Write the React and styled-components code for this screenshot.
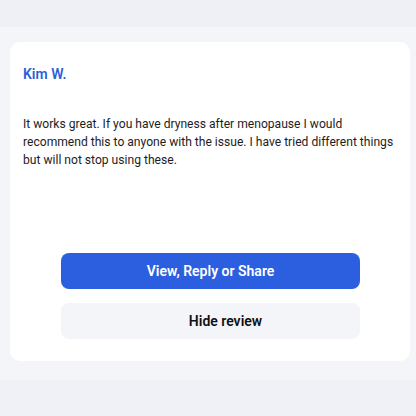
import styled, { createGlobalStyle } from "styled-components";

const GlobalStyle = createGlobalStyle`
  html, body {
    margin: 0;
    padding: 0;
    background: #f4f5f9;
    font-family: Roboto, "Noto Sans", sans-serif;
  }
`;

const Page = styled.div`
  display: flex;
  flex-direction: column;
  width: 416px;
  height: 416px;
  background: #f4f5f9;
`;

const TopBand = styled.div`
  height: 27px;
  background: #eff0f5;
`;

const Main = styled.main`
  flex: 1;
  padding: 15px 6px 0 10px;
`;

const BottomBand = styled.div`
  height: 36px;
  background: #f0f1f6;
`;

const Card = styled.section`
  display: flex;
  flex-direction: column;
  box-sizing: border-box;
  height: 319px;
  padding: 24px 12px 22px 13px;
  background: #fff;
  border-radius: 10px;
`;

const Author = styled.h3`
  margin: 0;
  font-size: 14px;
  line-height: 17px;
  font-weight: 600;
  color: #2c5fd9;
`;

const Body = styled.p`
  margin: 32px 0 0;
  font-size: 12.1px;
  line-height: 18px;
  color: #1d1d1f;
`;

const Actions = styled.div`
  display: flex;
  flex-direction: column;
  gap: 14px;
  margin: auto 38px 0 38px;
`;

const Button = styled.button`
  height: 36px;
  border: none;
  border-radius: 8px;
  font-family: inherit;
  font-size: 14px;
  font-weight: 600;
  padding: 0 0 0 ${(p) => (p.$offset ? "30px" : "0")};
  background: ${(p) => (p.$primary ? "#2c5fe0" : "#f4f5f9")};
  color: ${(p) => (p.$primary ? "#fff" : "#111")};
`;

export default function App() {
  return (
    <>
      <GlobalStyle />
      <Page>
        <TopBand />
        <Main>
          <Card>
            <Author>Kim W.</Author>
            <Body>
              It works great. If you have dryness after menopause I would
              recommend this to anyone with the issue. I have tried different
              things but will not stop using these.
            </Body>
            <Actions>
              <Button $primary>View, Reply or Share</Button>
              <Button $offset>Hide review</Button>
            </Actions>
          </Card>
        </Main>
        <BottomBand />
      </Page>
    </>
  );
}
